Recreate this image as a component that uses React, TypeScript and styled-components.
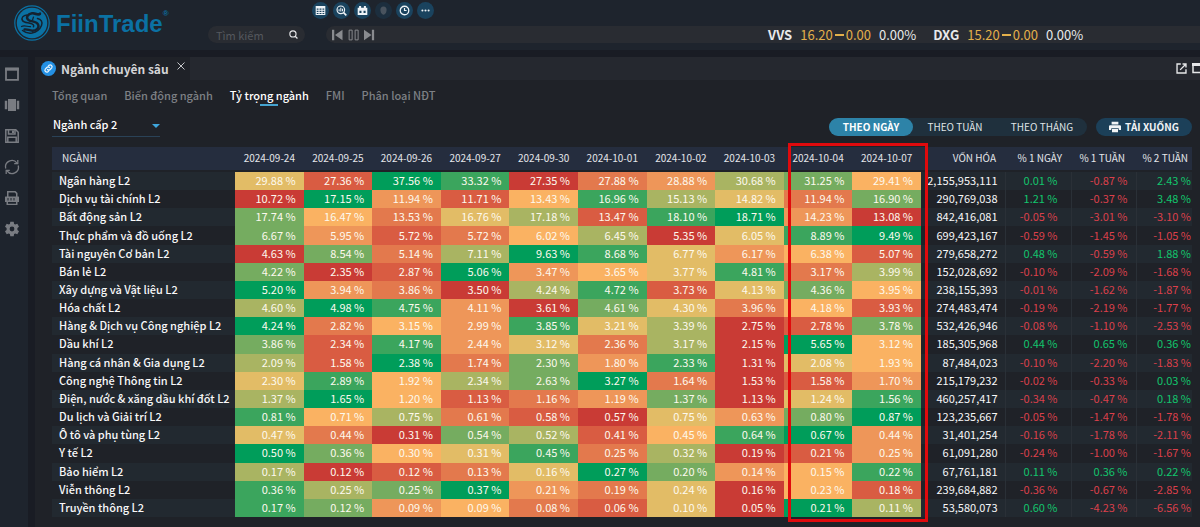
import React from "react";
import styled, { createGlobalStyle, css } from "styled-components";

const font = `"Noto Sans CJK SC", "Noto Sans", sans-serif`;

const heat = [
  "#c93b35", "#d95c42", "#e3794d", "#ee9659", "#fab262",
  "#e2bc66", "#a9b462", "#75ac60", "#3ba55d", "#009d5a",
];

const dates = [
  "2024-09-24", "2024-09-25", "2024-09-26", "2024-09-27", "2024-09-30",
  "2024-10-01", "2024-10-02", "2024-10-03", "2024-10-04", "2024-10-07",
];

type Sector = {
  name: string;
  weights: string;
  /** One digit per day: the rank of that day's weight within the row, 0 lowest. */
  ranks: string;
  cap: string;
  changes: [string, string, string];
};

const sectors: Sector[] = [
  { name: "Ngân hàng L2", weights: "29.88 27.36 37.56 33.32 27.35 27.88 28.88 30.68 31.25 29.41", ranks: "5198023674", cap: "2,155,953,111", changes: ["0.01", "-0.87", "2.43"] },
  { name: "Dịch vụ tài chính L2", weights: "10.72 17.15 11.94 11.71 13.43 16.96 15.13 14.82 11.94 16.90", ranks: "0931486527", cap: "290,769,038", changes: ["1.21", "-0.37", "3.48"] },
  { name: "Bất động sản L2", weights: "17.74 16.47 13.53 16.76 17.18 13.47 18.10 18.71 14.23 13.08", ranks: "7425618930", cap: "842,416,081", changes: ["-0.05", "-3.01", "-3.10"] },
  { name: "Thực phẩm và đồ uống L2", weights: "6.67 5.95 5.72 5.72 6.02 6.45 5.35 6.05 8.89 9.49", ranks: "7312460589", cap: "699,423,167", changes: ["-0.59", "-1.45", "-1.05"] },
  { name: "Tài nguyên Cơ bản L2", weights: "4.63 8.54 5.14 7.11 9.63 8.68 6.77 6.17 6.38 5.07", ranks: "0726985341", cap: "279,658,272", changes: ["0.48", "-0.59", "1.88"] },
  { name: "Bán lẻ L2", weights: "4.22 2.35 2.87 5.06 3.47 3.65 3.77 4.81 3.17 3.99", ranks: "7019345826", cap: "152,028,692", changes: ["-0.10", "-2.09", "-1.68"] },
  { name: "Xây dựng và Vật liệu L2", weights: "5.20 3.94 3.86 3.50 4.24 4.72 3.73 4.13 4.36 3.95", ranks: "9320681574", cap: "238,155,393", changes: ["-0.01", "-1.62", "-1.87"] },
  { name: "Hóa chất L2", weights: "4.60 4.98 4.75 4.11 3.61 4.61 4.30 3.96 4.18 3.93", ranks: "6983075241", cap: "274,483,474", changes: ["-0.19", "-2.19", "-1.77"] },
  { name: "Hàng & Dịch vụ Công nghiệp L2", weights: "4.24 2.82 3.15 2.99 3.85 3.21 3.39 2.75 2.78 3.78", ranks: "9243856017", cap: "532,426,946", changes: ["-0.08", "-1.10", "-2.53"] },
  { name: "Dầu khí L2", weights: "3.86 2.34 4.17 2.44 3.12 2.36 3.17 2.15 5.65 3.12", ranks: "7183526094", cap: "185,305,968", changes: ["0.44", "0.65", "0.36"] },
  { name: "Hàng cá nhân & Gia dụng L2", weights: "2.09 1.58 2.38 1.74 2.30 1.80 2.33 1.31 2.08 1.93", ranks: "6192738054", cap: "87,484,023", changes: ["-0.10", "-2.20", "-1.83"] },
  { name: "Công nghệ Thông tin L2", weights: "2.30 2.89 1.92 2.34 2.63 3.27 1.64 1.53 1.58 1.70", ranks: "5846792013", cap: "215,179,232", changes: ["-0.02", "-0.33", "0.03"] },
  { name: "Điện, nước & xăng dầu khí đốt L2", weights: "1.37 1.65 1.20 1.13 1.16 1.19 1.37 1.13 1.24 1.56", ranks: "6941237058", cap: "460,257,417", changes: ["-0.34", "-0.47", "0.18"] },
  { name: "Du lịch và Giải trí L2", weights: "0.81 0.71 0.75 0.61 0.58 0.57 0.75 0.63 0.80 0.87", ranks: "8462105379", cap: "123,235,667", changes: ["-0.05", "-1.47", "-1.78"] },
  { name: "Ô tô và phụ tùng L2", weights: "0.47 0.44 0.31 0.54 0.52 0.41 0.45 0.64 0.67 0.44", ranks: "5207614893", cap: "31,401,254", changes: ["-0.16", "-1.78", "-2.11"] },
  { name: "Y tế L2", weights: "0.50 0.36 0.30 0.31 0.45 0.25 0.32 0.19 0.21 0.25", ranks: "9745826013", cap: "61,091,280", changes: ["-0.24", "-1.00", "-1.67"] },
  { name: "Bảo hiểm L2", weights: "0.17 0.12 0.12 0.13 0.16 0.27 0.20 0.14 0.15 0.22", ranks: "6012597348", cap: "67,761,181", changes: ["0.11", "0.36", "0.22"] },
  { name: "Viễn thông L2", weights: "0.36 0.25 0.25 0.37 0.21 0.19 0.24 0.16 0.23 0.18", ranks: "8679325041", cap: "239,684,882", changes: ["-0.36", "-0.67", "-2.85"] },
  { name: "Truyền thông L2", weights: "0.17 0.12 0.09 0.09 0.08 0.06 0.10 0.05 0.21 0.11", ranks: "8734215096", cap: "53,580,073", changes: ["0.60", "-4.23", "-6.56"] },
];

const GlobalStyle = createGlobalStyle`
  * { box-sizing: border-box; }
  body { margin: 0; background: #191c24; color: #e8e9eb; font-family: ${font}; overflow-x: hidden; }
  button, input, select { font-family: inherit; border: 0; margin: 0; padding: 0; background: none; color: inherit; }
  button { cursor: pointer; }
  svg { display: block; flex: none; }
`;

const Page = styled.div`
  display: flex;
  flex-direction: column;
  min-height: 100vh;
`;

const Header = styled.header`
  display: flex;
  height: 50px;
  background: #1e242d;
`;

const Brand = styled.a`
  display: flex;
  width: 208px;
  padding: 5px 0 9px 14px;
  gap: 6px;
  align-items: center;
  color: #0b71a3;
  text-decoration: none;
`;

const BrandName = styled.span`
  display: flex;
  padding-top: 2px;
  font: bold 24px/28px "Liberation Sans", Arial, sans-serif;
`;

const Registered = styled.sup`
  font-size: 8px;
  line-height: 8px;
`;

const HeaderMain = styled.div`
  flex: 1;
  min-width: 0;
  display: flex;
  flex-direction: column;
  gap: 7px;
  padding-top: 2px;
`;

const Shortcuts = styled.div`
  display: flex;
  gap: 4px;
  padding-left: 104px;
`;

const RoundButton = styled.button<{ $dim?: boolean }>`
  display: grid;
  place-items: center;
  width: 17px;
  height: 17px;
  border-radius: 50%;
  background: #1a435e;
  color: #eef3f7;
  opacity: ${(p) => (p.$dim ? 0.35 : 1)};
`;

const HeaderRow = styled.div`
  display: flex;
  gap: 21px;
`;

const SearchBox = styled.label`
  display: flex;
  align-items: center;
  width: 97px;
  height: 17px;
  padding: 0 7px 0 8px;
  border-radius: 9px;
  background: #292c32;
`;

const SearchInput = styled.input`
  flex: 1;
  min-width: 0;
  height: 17px;
  font-size: 11px;
  outline: 0;
  &::placeholder { color: #55585e; opacity: 1; }
`;

const Ticker = styled.div`
  flex: 1;
  display: flex;
  align-items: center;
  height: 17px;
  padding-left: 6px;
  border-radius: 9px 0 0 9px;
  background: #292c32;
`;

const Player = styled.div`
  display: flex;
  gap: 4px;
  width: 436px;
  color: #898b8f;
`;

const PlayerButton = styled.button`
  display: block;
`;

const Quote = styled.div`
  display: flex;
  gap: 8px;
  margin-right: 17px;
  font-size: 13px;
  line-height: 17px;
`;

const Flat = styled.span`
  display: flex;
  align-items: center;
  gap: 2px;
  color: #e3b04b;
`;

const Body = styled.div`
  flex: 1;
  display: flex;
  gap: 7px;
  padding-top: 7px;
`;

const Sidebar = styled.nav`
  display: flex;
  flex-direction: column;
  gap: 15px;
  width: 28px;
  padding: 9px 0 0 4px;
  background: #1e242d;
`;

const SideButton = styled.button`
  display: grid;
  place-items: center;
  width: 16px;
  height: 16px;
  color: #797c82;
`;

const Panel = styled.main`
  flex: 1;
  min-width: 0;
  display: flex;
  flex-direction: column;
  background: #1f2228;
`;

const TabBar = styled.div`
  display: flex;
  justify-content: space-between;
  height: 23px;
  background: #25282f;
`;

const WindowTab = styled.div`
  display: flex;
  width: 155px;
  padding: 0 6px;
  gap: 5px;
  align-items: center;
  background: #1f2228;
`;

const TabTitle = styled.span`
  margin-right: 3px;
  font-size: 12px;
  font-weight: bold;
  line-height: 23px;
  white-space: nowrap;
  color: #d4d5d7;
`;

const CloseButton = styled.button`
  align-self: flex-start;
  padding-top: 5px;
  color: #c4c6c9;
`;

const WindowTools = styled.div`
  display: flex;
  gap: 5px;
  align-items: center;
  color: #e6e7e9;
`;

const Content = styled.div`
  flex: 1;
  display: flex;
  flex-direction: column;
  padding: 6px 8px 10px 17px;
`;

const SubNav = styled.nav`
  display: flex;
  gap: 17px;
`;

const SubLink = styled.a<{ $active?: boolean }>`
  display: flex;
  flex-direction: column;
  align-items: center;
  font-size: 11px;
  font-weight: 500;
  line-height: 18px;
  color: #7d8085;
  text-decoration: none;
  ${(p) =>
    p.$active &&
    css`
      color: #ffffff;
      &::after { content: ""; width: 18px; height: 2px; background: #45a3cf; }
    `}
`;

const FilterRow = styled.div`
  display: flex;
  align-items: flex-start;
  gap: 9px;
  padding: 10px 0 10px;
`;

const LevelPicker = styled.div`
  display: flex;
  align-items: center;
  width: 108px;
  margin-right: auto;
  border-bottom: 1px solid #2a4257;
`;

const LevelSelect = styled.select`
  flex: 1;
  height: 20px;
  appearance: none;
  padding-left: 1px;
  padding-bottom: 4px;
  font-size: 11px;
  font-weight: 500;
  color: #ffffff;
  outline: 0;
`;

const Periods = styled.div`
  display: flex;
  margin-top: 2px;
  border-radius: 9px;
  background: #1f303d;
`;

const PeriodButton = styled.button<{ $active?: boolean; $width: number }>`
  width: ${(p) => p.$width}px;
  height: 18px;
  border-radius: 9px;
  font-size: 10px;
  line-height: 18px;
  color: #dfe3e6;
  ${(p) =>
    p.$active &&
    css`
      background: #2d83a8;
      color: #fff;
      font-weight: bold;
    `}
`;

const DownloadButton = styled.button`
  display: flex;
  justify-content: center;
  align-items: center;
  gap: 4px;
  width: 96px;
  height: 18px;
  margin-top: 2px;
  border-radius: 9px;
  background: #1c4059;
  font-size: 10px;
  font-weight: bold;
  line-height: 18px;
  color: #f1f4f6;
`;

const TableArea = styled.div`
  position: relative;
  flex: 1;
  display: flex;
`;

const Marker = styled.div`
  position: absolute;
  top: -4px;
  bottom: -5px;
  right: 264px;
  width: 140px;
  border: 3px solid #e00a0d;
  pointer-events: none;
`;

const Table = styled.table`
  width: 100%;
  table-layout: fixed;
  border-collapse: collapse;
`;

const HeadCell = styled.th<{ $align?: string; $right?: number }>`
  height: 24px;
  padding: 0 ${(p) => p.$right ?? 0}px 2px ${(p) => (p.$align === "left" ? 10 : 0)}px;
  border-bottom: 2px solid #1f2228;
  background: #252d3e;
  background-clip: padding-box;
  font-size: 10px;
  font-weight: normal;
  line-height: 16px;
  text-align: ${(p) => p.$align ?? "center"};
  white-space: nowrap;
  color: #e4e6ea;
`;

const Row = styled.tr`
  &:nth-child(odd) { background: #222930; }
`;

const NameCell = styled.th`
  padding: 0 0 2px 7px;
  font-size: 11px;
  font-weight: 500;
  line-height: 16px;
  text-align: left;
  white-space: nowrap;
  color: #f8f8f9;
`;

const Cell = styled.td`
  padding: 0 8px 2px 0;
  font-size: 11px;
  line-height: 16px;
  text-align: right;
  white-space: nowrap;
`;

const HeatCell = styled(Cell)<{ $rank: number }>`
  background: ${(p) => heat[p.$rank]};
  color: #fdf9ee;
`;

const CapCell = styled(Cell)`
  padding-right: 7px;
  color: #f8f8f9;
`;

const ChangeCell = styled(Cell)<{ $up: boolean; $pad: number }>`
  padding-right: ${(p) => p.$pad}px;
  border-left: 1px solid #2a3037;
  color: ${(p) => (p.$up ? "#12c56d" : "#dc404b")};
`;

const changePads = [13, 8, 1];

type IconProps = { size?: number; children: React.ReactNode };

const Solid = ({ size = 16, children }: IconProps) => (
  <svg width={size} height={size} viewBox="0 0 16 16" fill="currentColor" aria-hidden="true">{children}</svg>
);

const Line = ({ size = 16, children }: IconProps) => (
  <svg width={size} height={size} viewBox="0 0 16 16" fill="none" stroke="currentColor" strokeWidth="1.5" aria-hidden="true">{children}</svg>
);

const Logo = () => (
  <svg width="36" height="36" viewBox="0 0 36 36" fill="none" stroke="currentColor" aria-hidden="true">
    <circle cx="18" cy="18" r="17.2" strokeWidth="1.2" />
    <circle cx="18" cy="18" r="15.2" fill="currentColor" stroke="none" />
    <g stroke="#15222f" strokeLinecap="round" strokeLinejoin="round">
      <path d="M26 8.500c-2 2.500-4-1-8-.2-4.500.9-6.500 4.500-3.500 6.600 3 2 8 1.400 9.600 4.600 1.500 3.200-1.600 6.200-5.600 6.200-3.500 0-5-1.800-8-1.200" strokeWidth="2.400" />
      <path d="M13 10c-4 .2-6 3-4.500 5.500 1.400 2.200 4.500 2 7.500 2.700 3.200.8 4.200 2 3.500 3.500M23.500 13.500c3.500.5 5.500 3.500 4 7-1.200 3-4.500 6.500-9.500 7.500-4 .6-7-.5-9.500-2.500" strokeWidth="1.500" />
      <path d="M7.500 21.500c3-1.800 6 .5 9 .2M19 8.500c2.500 1.500 5 2 7.500 1M19.500 12l-1 3" strokeWidth="1.200" />
    </g>
  </svg>
);

const shortcuts: { label: string; dim?: boolean; icon: React.ReactNode }[] = [
  {
    label: "Bảng giá",
    icon: (
      <Solid size={11}>
        <path fillRule="evenodd" d="M1 1.500h14v13H1zM2.500 5v2h2.600V5zM6.600 5v2h2.800V5zM10.900 5v2h2.600V5zM2.500 8.300v1.900h2.600V8.300zM6.600 8.300v1.900h2.800V8.300zM10.900 8.300v1.900h2.600V8.300zM2.500 11.500v1.700h2.600v-1.700zM6.600 11.500v1.700h2.800v-1.700zM10.900 11.500v1.700h2.600v-1.700z" />
      </Solid>
    ),
  },
  {
    label: "Bộ lọc",
    icon: (
      <Line size={11}>
        <circle cx="7" cy="7" r="5.500" strokeWidth="1.700" />
        <path d="M11 11l4 4" strokeWidth="2.400" />
        <path d="M4.500 9V6M7 9.500V4M9.500 9V5.500" />
      </Line>
    ),
  },
  {
    label: "Lịch sự kiện",
    icon: (
      <Solid size={11}>
        <path fillRule="evenodd" d="M3 1.500h3V4h4V1.500h3V4h2v10.500H1V4h2zM3.500 8.500v3h3v-3zM9.500 8.500v3h3v-3z" />
      </Solid>
    ),
  },
  {
    label: "Thông báo",
    dim: true,
    icon: (
      <Solid size={11}>
        <path d="M8 2c3 0 4.500 2 4.500 5S11 14 8 14s-4.500-4-4.500-7S5 2 8 2z" opacity=".6" />
      </Solid>
    ),
  },
  {
    label: "Lịch sử",
    icon: (
      <Line size={11}>
        <circle cx="8" cy="8" r="6.200" strokeWidth="1.900" />
        <path d="M8 4.500V8h3" strokeWidth="1.700" />
      </Line>
    ),
  },
  {
    label: "Thêm",
    icon: (
      <Solid size={11}>
        <circle cx="3.500" cy="8" r="1.500" />
        <circle cx="8" cy="8" r="1.500" />
        <circle cx="12.500" cy="8" r="1.500" />
      </Solid>
    ),
  },
];

const sideItems: { label: string; icon: React.ReactNode }[] = [
  { label: "Cửa sổ", icon: <Line><path d="M2 2.500h12v11.300H2z" strokeWidth="1.800" /><path d="M1.100 3.300h13.800" strokeWidth="2.800" /></Line> },
  { label: "Bố cục", icon: <Solid><path d="M4 2h8v12H4zM.8 3.800h2.400v8.400H.8zM12.800 3.800h2.400v8.400h-2.400z" /></Solid> },
  {
    label: "Lưu",
    icon: (
      <Line>
        <path d="M1.800 1.800h10l2.400 2.500v9.900H1.800z" />
        <path d="M4.500 2v4h6.500V2M3.800 14V9.300h8.400V14" />
        <path d="M9 2.500v2.500" strokeWidth="2" />
      </Line>
    ),
  },
  {
    label: "Tải lại",
    icon: (
      <Line>
        <path d="M1.800 9.500A6.300 6.300 0 0 1 13 4.200M14.200 6.500A6.300 6.300 0 0 1 3 11.800" strokeWidth="1.300" />
        <path d="M13.800 1v3.600h-3.600M2.200 15v-3.600h3.600" strokeWidth="1.300" />
      </Line>
    ),
  },
  {
    label: "In báo cáo",
    icon: (
      <Solid>
        <path fillRule="evenodd" d="M3 1h8.500L13.500 3v3.500H12V3.700L10.800 2.500H4.500v4H3zM1.500 6.500h13a.5.5 0 0 1 .5.500v5h-1.500v3h-11v-3H1V7a.5.5 0 0 1 .5-.5zM4 12v1.700h8V12zM3.500 8v2.500h1V8zM6.500 8v2.500h1V8zM9.500 8v2.500h1V8z" />
      </Solid>
    ),
  },
  {
    label: "Cài đặt",
    icon: (
      <Solid>
        <path fillRule="evenodd" d="M6.300.8h3.400l.4 2.100 1.200.7 2-.8 1.700 2.900-1.600 1.400v1.800l1.600 1.400-1.700 2.900-2-.8-1.200.7-.4 2.100H6.300l-.4-2.100-1.200-.7-2 .8L1 10.300l1.600-1.400V7.100L1 5.700l1.700-2.900 2 .8 1.200-.7zM8 5.600a2.400 2.400 0 1 0 0 4.800 2.400 2.400 0 0 0 0-4.800z" />
      </Solid>
    ),
  },
];

const quotes = [
  { code: "VVS", price: "16.20" },
  { code: "DXG", price: "15.20" },
];

const sections = ["Tổng quan", "Biến động ngành", "Tỷ trọng ngành", "FMI", "Phân loại NĐT"];

export default function App() {
  return (
    <Page>
      <GlobalStyle />
      <Header>
        <Brand href="#">
          <Logo />
          <BrandName>
            FiinTrade<Registered>®</Registered>
          </BrandName>
        </Brand>
        <HeaderMain>
          <Shortcuts>
            {shortcuts.map((s) => (
              <RoundButton key={s.label} aria-label={s.label} $dim={s.dim}>{s.icon}</RoundButton>
            ))}
          </Shortcuts>
          <HeaderRow>
            <SearchBox>
              <SearchInput placeholder="Tìm kiếm" aria-label="Tìm kiếm" />
              <Line size={9}><circle cx="7" cy="7" r="5.500" strokeWidth="2" /><path d="M11 11l4 4" strokeWidth="2.200" /></Line>
            </SearchBox>
            <Ticker>
              <Player>
                <PlayerButton aria-label="Trước">
                  <Solid size={12}><path d="M0 1h3v14H0zM14 1v14L4 8z" /></Solid>
                </PlayerButton>
                <PlayerButton aria-label="Tạm dừng">
                  <Line size={12}><path d="M1.500 1.500h4v13h-4zM9.500 1.500h4v13h-4z" strokeWidth="1.300" /></Line>
                </PlayerButton>
                <PlayerButton aria-label="Sau">
                  <Solid size={12}><path d="M10.500 1h3v14h-3zM0 1v14L10 8z" /></Solid>
                </PlayerButton>
              </Player>
              {quotes.map((q) => (
                <Quote key={q.code}>
                  <b>{q.code}</b>
                  <Flat>
                    <span>{q.price}</span>
                    <svg width="9" height="2" viewBox="0 0 9 2" fill="currentColor" aria-hidden="true"><path d="M0 0h9v2H0z" /></svg>
                    <span>0.00</span>
                  </Flat>
                  <span>0.00%</span>
                </Quote>
              ))}
            </Ticker>
          </HeaderRow>
        </HeaderMain>
      </Header>
      <Body>
        <Sidebar>
          {sideItems.map((s) => (
            <SideButton key={s.label} aria-label={s.label}>{s.icon}</SideButton>
          ))}
        </Sidebar>
        <Panel>
          <TabBar>
            <WindowTab>
              <svg width="15" height="15" viewBox="0 0 24 24" fill="none" aria-hidden="true">
                <circle cx="12" cy="12" r="12" fill="#2490e3" />
                <g stroke="#e8f4fd" strokeWidth="2" strokeLinecap="round">
                  <path d="M10.500 13.500a3 3 0 0 0 4.200 0l2.400-2.400a3 3 0 0 0-4.200-4.200l-1 1" />
                  <path d="M13.500 10.500a3 3 0 0 0-4.200 0l-2.400 2.400a3 3 0 0 0 4.200 4.200l1-1" />
                </g>
              </svg>
              <TabTitle>Ngành chuyên sâu</TabTitle>
              <CloseButton aria-label="Đóng">
                <Line size={8}><path d="M1 1l14 14M15 1L1 15" strokeWidth="2" /></Line>
              </CloseButton>
            </WindowTab>
            <WindowTools>
              <Line size={11}>
                <path d="M7 1.500H1.500v13h13V9" strokeWidth="2" />
                <path d="M9.500 1.500h5v5M14.500 1.500L6 10" strokeWidth="2" />
              </Line>
              <svg width="8" height="11" viewBox="0 0 8 11" fill="none" stroke="currentColor" aria-hidden="true">
                <path d="M8 9.500H1V1h7" strokeWidth="1.500" />
                <path d="M0 1.500h8" strokeWidth="3" />
              </svg>
            </WindowTools>
          </TabBar>
          <Content>
            <SubNav>
              {sections.map((s, i) => (
                <SubLink key={s} href="#" $active={i === 2}>{s}</SubLink>
              ))}
            </SubNav>
            <FilterRow>
              <LevelPicker>
                <LevelSelect aria-label="Cấp ngành" defaultValue="2">
                  <option value="2">Ngành cấp 2</option>
                </LevelSelect>
                <svg width="8" height="4" viewBox="0 0 8 4" fill="#3ea6dc" aria-hidden="true"><path d="M0 0h8L4 4z" /></svg>
              </LevelPicker>
              <Periods>
                <PeriodButton $active $width={84}>THEO NGÀY</PeriodButton>
                <PeriodButton $width={84}>THEO TUẦN</PeriodButton>
                <PeriodButton $width={90}>THEO THÁNG</PeriodButton>
              </Periods>
              <DownloadButton>
                <Solid size={12}>
                  <path d="M3.500 1h9v3.500h-9zM1.500 5.500h13A1.500 1.500 0 0 1 16 7v5h-3V9.500H3V12H0V7a1.500 1.500 0 0 1 1.500-1.500zM4 10.500h8V15H4z" />
                </Solid>
                TẢI XUỐNG
              </DownloadButton>
            </FilterRow>
            <TableArea>
              <Table>
                <colgroup>
                  <col width="183" />
                  {dates.map((d) => <col key={d} />)}
                  <col width="84" />
                  <col width="66" />
                  <col width="65" />
                  <col width="56" />
                </colgroup>
                <thead>
                  <tr>
                    <HeadCell $align="left">NGÀNH</HeadCell>
                    {dates.map((d) => <HeadCell key={d}>{d}</HeadCell>)}
                    <HeadCell $align="right" $right={9}>VỐN HÓA</HeadCell>
                    <HeadCell $align="right" $right={9}>% 1 NGÀY</HeadCell>
                    <HeadCell $align="right" $right={11}>% 1 TUẦN</HeadCell>
                    <HeadCell $align="right" $right={4}>% 2 TUẦN</HeadCell>
                  </tr>
                </thead>
                <tbody>
                  {sectors.map((s) => (
                    <Row key={s.name}>
                      <NameCell scope="row">{s.name}</NameCell>
                      {s.weights.split(" ").map((w, i) => (
                        <HeatCell key={dates[i]} $rank={Number(s.ranks[i])}>{`${w} %`}</HeatCell>
                      ))}
                      <CapCell>{s.cap}</CapCell>
                      {s.changes.map((c, i) => (
                        <ChangeCell key={i} $up={!c.startsWith("-")} $pad={changePads[i]}>{`${c} %`}</ChangeCell>
                      ))}
                    </Row>
                  ))}
                </tbody>
              </Table>
              <Marker />
            </TableArea>
          </Content>
        </Panel>
      </Body>
    </Page>
  );
}
